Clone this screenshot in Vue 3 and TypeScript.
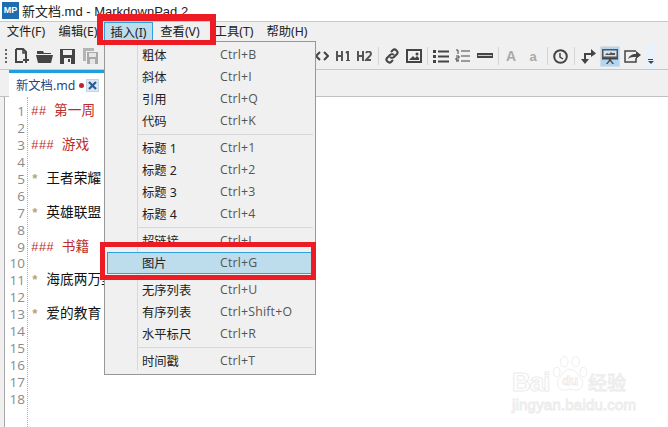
<script setup lang="ts">
interface MenuEntry { label?: string; key?: string; active?: boolean; sep?: boolean }
const menuBar = ['文件(F)', '编辑(E)', '插入(I)', '查看(V)', '工具(T)', '帮助(H)']
const entries: MenuEntry[] = [
  { label: '粗体', key: 'Ctrl+B' }, { label: '斜体', key: 'Ctrl+I' }, { label: '引用', key: 'Ctrl+Q' }, { label: '代码', key: 'Ctrl+K' },
  { sep: true },
  { label: '标题 1', key: 'Ctrl+1' }, { label: '标题 2', key: 'Ctrl+2' }, { label: '标题 3', key: 'Ctrl+3' }, { label: '标题 4', key: 'Ctrl+4' },
  { sep: true },
  { label: '超链接', key: 'Ctrl+L' }, { label: '图片', key: 'Ctrl+G', active: true },
  { sep: true },
  { label: '无序列表', key: 'Ctrl+U' }, { label: '有序列表', key: 'Ctrl+Shift+O' }, { label: '水平标尺', key: 'Ctrl+R' },
  { sep: true },
  { label: '时间戳', key: 'Ctrl+T' }
]
const lines: { mark?: string; text?: string; kind?: string }[] = [
  { mark: '## ', text: '第一周', kind: 'head' }, {},
  { mark: '### ', text: '游戏', kind: 'head' }, {},
  { mark: '* ', text: '王者荣耀', kind: 'item' }, {},
  { mark: '* ', text: '英雄联盟', kind: 'item' }, {},
  { mark: '### ', text: '书籍', kind: 'head' }, {},
  { mark: '* ', text: '海底两万里', kind: 'item' }, {},
  { mark: '* ', text: '爱的教育', kind: 'item' }, {}, {}, {}, {}, {}
]
</script>

<template>
  <div class="app">
    <header class="title">
      <span class="logo">MP</span>
      <span>新文档.md - MarkdownPad 2</span>
    </header>

    <nav class="menubar">
      <span v-for="(m, i) in menuBar" :key="m" class="mb-item" :class="{ on: i === 2 }">{{ m }}</span>
    </nav>

    <div class="toolbar">
      <div class="tb-group">
        <span class="grip"></span>
        <svg class="ic" width="16" height="18" viewBox="0 0 16 18"><path d="M2 2h7l3 3v5M2 2v13h7" fill="none" stroke="#444" stroke-width="2"/><path d="M9 2v4h4" fill="none" stroke="#444" stroke-width="1.5"/><path d="M12 10v6M9 13h6" stroke="#444" stroke-width="2"/></svg>
        <svg class="ic" width="17" height="18" viewBox="0 0 17 18"><path d="M1 4h6l1 2h7v1H1z" fill="#444"/><path d="M0 8h17l-2 8H2z" fill="#444"/></svg>
        <svg class="ic" width="17" height="18" viewBox="0 0 17 18"><path d="M1 2h15v15H1z" fill="#444"/><path d="M4 3h9v5H4z" fill="#f0f0f0"/><path d="M5 11h7v6H5z" fill="#f0f0f0"/><path d="M9 12h2v3H9z" fill="#444"/></svg>
        <svg class="ic" width="17" height="18" viewBox="0 0 17 18"><path d="M1 1h11v3H4v10H1z" fill="#b4b4b4"/><path d="M5 5h11v12H5z" fill="#a8a8a8"/><path d="M7 6h7v4H7zM8 12h5v5H8z" fill="#e6e6e6"/></svg>
        <span class="tsep"></span>
      </div>
      <div class="tb-group right">
        <svg class="ic" width="14" height="12" viewBox="0 0 14 12"><path d="M5 2 1 6l4 4M9 2l4 4-4 4" fill="none" stroke="#444" stroke-width="2"/></svg>
        <svg class="ic m7" width="16" height="10" viewBox="0 0 16 10"><path d="M1 0v10M6 0v10M1 5h5M10 2l2-2v10M10 10h4" fill="none" stroke="#555" stroke-width="2"/></svg>
        <svg class="ic m5" width="15" height="10" viewBox="0 0 15 10"><path d="M1 0v10M6 0v10M1 5h5M9 2c1-2 5-2 5 1 0 2-4 4-5 6h5" fill="none" stroke="#555" stroke-width="2"/></svg>
        <span class="tsep m6"></span>
        <svg class="ic m5" width="16" height="16" viewBox="0 0 16 16"><path d="M7 4l2-2c2-2 6 2 4 4l-3 3c-1 1-3 1-4 0M9 12l-2 2c-2 2-6-2-4-4l3-3c1-1 3-1 4 0" fill="none" stroke="#444" stroke-width="2"/></svg>
        <svg class="ic m6" width="16" height="14" viewBox="0 0 16 14"><path d="M1 1h14v12H1z" fill="none" stroke="#444" stroke-width="2"/><path d="M3 11l4-4 2 2 2-2 2 2v2z" fill="#444"/><circle cx="11" cy="5" r="1.5" fill="#444"/></svg>
        <span class="tsep m5"></span>
        <svg class="ic m5" width="16" height="14" viewBox="0 0 16 14"><path d="M0 1h3v3H0zM0 6h3v3H0zM0 11h3v3H0zM5 1.500h11v2H5zM5 6.500h11v2H5zM5 11.500h11v2H5z" fill="#444"/></svg>
        <svg class="ic m6" width="15" height="14" viewBox="0 0 15 14"><path d="M1 1h2v4M1 7h3v2H1v2h3M1 12h3" fill="none" stroke="#444"/><path d="M6 2h9M6 7h9M6 12h9" stroke="#444"/></svg>
        <svg class="ic m7" width="16" height="6" viewBox="0 0 16 6"><path d="M0 0h16v5H0z" fill="#444"/><path d="M1 2h14v1H1z" fill="#ccc"/></svg>
        <span class="tsep m5"></span>
        <span class="aa big">A</span>
        <span class="aa small">a</span>
        <span class="tsep m9"></span>
        <svg class="ic m5" width="15" height="15" viewBox="0 0 15 15"><circle cx="7.500" cy="7.500" r="6.300" fill="none" stroke="#444" stroke-width="2"/><path d="M7 4v4l3 2" fill="none" stroke="#444" stroke-width="1.500"/></svg>
        <span class="tsep m6"></span>
        <svg class="ic m6" width="15" height="15" viewBox="0 0 15 15"><path d="M4 15 0 10h3V4h7V0l5 4.500L10 8V6H5v4h3z" fill="#444"/></svg>
        <span class="present"><svg width="16" height="16" viewBox="0 0 16 16"><path d="M0 1h16v9H0z" fill="#555"/><path d="M1.500 2.500h13v6h-13z" fill="#cfe4f5"/><path d="M3 7l2-2 2 1 2-2 1 1h3v2z" fill="#555"/><path d="M0 10h16v1.500H0zM7 11h2v1l3 4h-1.500L8 13l-2.500 3H4l3-4z" fill="#444"/></svg></span>
        <svg class="ic m4" width="17" height="14" viewBox="0 0 17 14"><path d="M12 2H1v11h11V9" fill="none" stroke="#444" stroke-width="1.500"/><path d="M4 10c1-3 4-5 8-5V2l5 4-5 4V8c-3 0-6 0-8 2z" fill="#444"/></svg>
        <span class="overflow"><i></i><b></b></span>
      </div>
    </div>

    <div class="tabstrip">
      <div class="tab">
        <span>新文档.md</span>
        <i class="dot"></i>
        <span class="close">
          <svg width="9" height="9" viewBox="0 0 9 9"><path d="M1 1l7 7M8 1 1 8" stroke="#2c5a92" stroke-width="2.200"/></svg>
        </span>
      </div>
    </div>

    <main class="body">
      <div class="gutter">
        <div v-for="(l, i) in lines" :key="i" class="num">{{ i + 1 }}</div>
      </div>
      <div class="code">
        <div v-for="(l, i) in lines" :key="i" class="line" :class="l.kind"><span class="mark">{{ l.mark }}</span><span class="txt">{{ l.text }}</span></div>
      </div>
    </main>

    <div class="menu">
      <template v-for="(e, i) in entries" :key="i">
        <div v-if="e.sep" class="sep"><hr /></div>
        <div v-else class="entry" :class="{ active: e.active }">
          <span class="lbl">{{ e.label }}</span>
          <span class="key">{{ e.key }}</span>
        </div>
      </template>
    </div>

    <div class="redbox top"></div>
    <div class="redbox low"></div>

    <div class="wm">
      <div class="wm-row">
        <span class="wm-bai">Bai</span>
        <svg class="wm-paw" width="36" height="37" viewBox="0 0 38 39" fill="#fff" stroke="#ececec" stroke-width="1"><ellipse cx="5" cy="17" rx="3.500" ry="5"/><ellipse cx="13" cy="6" rx="4" ry="5.500"/><ellipse cx="25" cy="6" rx="4" ry="5.500"/><ellipse cx="33" cy="17" rx="3.500" ry="5"/><path d="M19 14c-6 0-8 6-12 10-4 6 1 13 7 12 4-1 6-1 10 0 6 1 11-6 7-12-4-4-6-10-12-10z"/><text x="19" y="31" text-anchor="middle" font-size="14" font-weight="bold" font-family="Liberation Sans, sans-serif">du</text></svg>
        <span class="wm-cn">经验</span>
      </div>
      <div class="wm-url">jingyan.baidu.com</div>
    </div>
  </div>
</template>

<style scoped>
.app {
  position: relative;
  width: 668px;
  height: 427px;
  overflow: hidden;
  background: #fff;
  font-family: "Noto Sans", "Noto Sans CJK SC", sans-serif;
  font-size: 12px;
  color: #222;
  display: flex;
  flex-direction: column;
}
.title {
  height: 21px;
  display: flex;
  align-items: center;
  gap: 3px;
  padding-left: 2px;
  font-family: "Liberation Sans", "Noto Sans CJK SC", sans-serif;
  font-size: 13px;
  color: #222;
  white-space: nowrap;
}
.logo {
  width: 17px;
  height: 17px;
  background: #1f6db0;
  color: #fff;
  font: bold 9px/17px "Liberation Sans", sans-serif;
  text-align: center;
}
.menubar {
  height: 21px;
  background: #f0f0f0;
  border-top: 1px solid #c8c8c8;
  display: flex;
  font-size: 12.300px;
  white-space: nowrap;
}
.mb-item {
  width: 52px;
  text-align: center;
  line-height: 20px;
  height: 19px;
  box-sizing: border-box;
  flex: none;
}
.mb-item:nth-child(5) { width: 56px; }
.mb-item:nth-child(6) { width: 50px; }
.mb-item.on {
  width: 49px;
  margin-right: 1px;
  background: #bddcec;
  border: 1px solid #2ea0dc;
  border-bottom: 0;
  line-height: 19px;
}
.toolbar {
  height: 26px;
  background: #f0f0f0;
  border-bottom: 1px solid #c8c8c8;
  display: flex;
  justify-content: space-between;
  align-items: center;
}
.tb-group {
  display: flex;
  align-items: center;
  gap: 6px;
}
.tb-group:first-child {
  padding-left: 5px;
}
.tb-group .grip + .ic {
  margin-left: 1px;
}
.tb-group.right {
  gap: 0;
  padding-right: 12px;
}
.grip {
  width: 2px;
  height: 14px;
  background: repeating-linear-gradient(to bottom, #666 0 2px, transparent 2px 4px);
}
.tsep {
  width: 1px;
  height: 18px;
  background: #d4d4d4;
}
.ic { display: block; flex: none; }
.m4 { margin-left: 4px; }
.m5 { margin-left: 5px; }
.m6 { margin-left: 6px; }
.m7 { margin-left: 7px; }
.m9 { margin-left: 9px; }
.aa {
  font-family: "Liberation Sans", sans-serif;
  font-weight: bold;
  color: #a9a9a9;
  width: 10px;
  text-align: center;
}
.aa.big { font-size: 14px; margin-left: 7px; }
.aa.small { font-size: 13px; margin-left: 12px; }
.present {
  width: 20px;
  height: 21px;
  background: #b0d6f3;
  border: 1px solid #d6dfe6;
  box-sizing: border-box;
  margin-left: 4px;
  display: flex;
  align-items: center;
  justify-content: center;
}
.overflow {
  width: 11px;
  height: 26px;
  margin-left: 4px;
  background: #e9f2fb;
  display: flex;
  flex-direction: column;
  align-items: center;
  justify-content: flex-end;
  padding-bottom: 5px;
  box-sizing: border-box;
  gap: 1px;
}
.overflow i { width: 5px; height: 1px; background: #444; }
.overflow b {
  width: 0; height: 0;
  border-left: 3px solid transparent;
  border-right: 3px solid transparent;
  border-top: 3px solid #444;
}
.tabstrip {
  height: 26px;
  background: #f0f0f0;
  border-bottom: 1px solid #c0c0c0;
  padding-left: 9px;
  display: flex;
  align-items: flex-end;
}
.tab {
  width: 96px;
  height: 27px;
  margin-bottom: -1px;
  flex: none;
  box-sizing: border-box;
  border-top: 3px solid #1f9fdc;
  background: #fff;
  color: #24467e;
  font-size: 12.300px;
  display: flex;
  align-items: center;
  padding-left: 7px;
  white-space: nowrap;
}
.dot {
  width: 5px;
  height: 5px;
  border-radius: 50%;
  background: #c4202a;
  margin-left: 4px;
  flex: none;
}
.close {
  width: 13px;
  height: 13px;
  margin-left: 2px;
  background: #dbe8f4;
  border: 1px solid #c6d4e2;
  box-sizing: border-box;
  display: flex;
  align-items: center;
  justify-content: center;
  flex: none;
}
.body {
  flex: 1;
  display: flex;
  background: #fff;
  min-height: 0;
  padding-left: 4px;
  background-image: linear-gradient(#f0f0f0, #f0f0f0);
  background-size: 4px 100%;
  background-repeat: no-repeat;
}
.gutter {
  width: 24px;
  box-sizing: border-box;
  border-left: 1px solid #a9a9a9;
  border-right: 1px dotted #aaa;
  padding: 6px 2px 0 0;
}
.num {
  height: 16.940px;
  text-align: right;
  color: #8a8a8a;
  font: 13.500px/17px "Open Sans", sans-serif;
}
.code {
  flex: 1;
  padding: 4px 0 0 3px;
}
.line {
  height: 16.940px;
  line-height: 17px;
  white-space: pre;
  font-size: 13.700px;
}
.mark {
  font-family: "Liberation Mono", monospace;
  font-size: 12.800px;
}
.head .mark, .head .txt { color: #bd2c2c; }
.item .mark { color: #b3a27e; font-weight: bold; }
.item .txt { color: #111; }
.menu {
  position: absolute;
  left: 104px;
  top: 41px;
  width: 212px;
  height: 334px;
  box-sizing: border-box;
  background: #f0f0f0;
  border: 1px solid #979797;
  padding: 2px;
  background-image: linear-gradient(#d7d7d7, #d7d7d7);
  background-size: 1px calc(100% - 6px);
  background-position: 32px 2px;
  background-repeat: no-repeat;
  font-size: 12.300px;
}
.entry {
  height: 22px;
  display: flex;
  align-items: center;
  padding: 0 0 1px 35px;
  box-sizing: border-box;
  color: #222;
  white-space: nowrap;
}
.entry.active {
  background: #bddcec;
  border: 1px solid #2ea0dc;
  padding: 0 0 1px 34px;
}
.lbl { width: 78px; flex: none; }
.key { color: #555; font-family: "Open Sans", sans-serif; letter-spacing: 0.2px; }
.sep {
  height: 5px;
  padding-left: 30px;
  display: flex;
  align-items: center;
}
.sep hr {
  flex: 1;
  margin: 0;
  border: 0;
  height: 1px;
  background: #d7d7d7;
}
.redbox {
  position: absolute;
  box-sizing: border-box;
  border-style: solid;
  border-color: #ed1c24;
}
.redbox.top {
  left: 97px;
  top: 14px;
  width: 119px;
  height: 31px;
  border-width: 7px 6px 5px;
}
.redbox.low {
  left: 100px;
  top: 242px;
  width: 216px;
  height: 38px;
  border-width: 5px;
}
.wm {
  position: absolute;
  left: 512px;
  top: 355px;
  width: 118px;
  font-family: "Liberation Sans", sans-serif;
  color: #fff;
  -webkit-text-stroke: 1px #ececec;
  white-space: nowrap;
}
.wm-row {
  display: flex;
  align-items: flex-end;
  height: 38px;
}
.wm-bai { font-size: 26px; font-weight: bold; line-height: 22px; letter-spacing: -1px; width: 40px; flex: none; }
.wm-paw { flex: none; -webkit-text-stroke: 0; }
.wm-cn { font-size: 19px; font-family: "Noto Sans CJK SC", sans-serif; line-height: 22px; flex: none; }
.wm-url { font-size: 15px; line-height: 18px; margin-top: 3px; letter-spacing: 0.2px; }
</style>

<style>
html, body { margin: 0; background: #fff; }
</style>
